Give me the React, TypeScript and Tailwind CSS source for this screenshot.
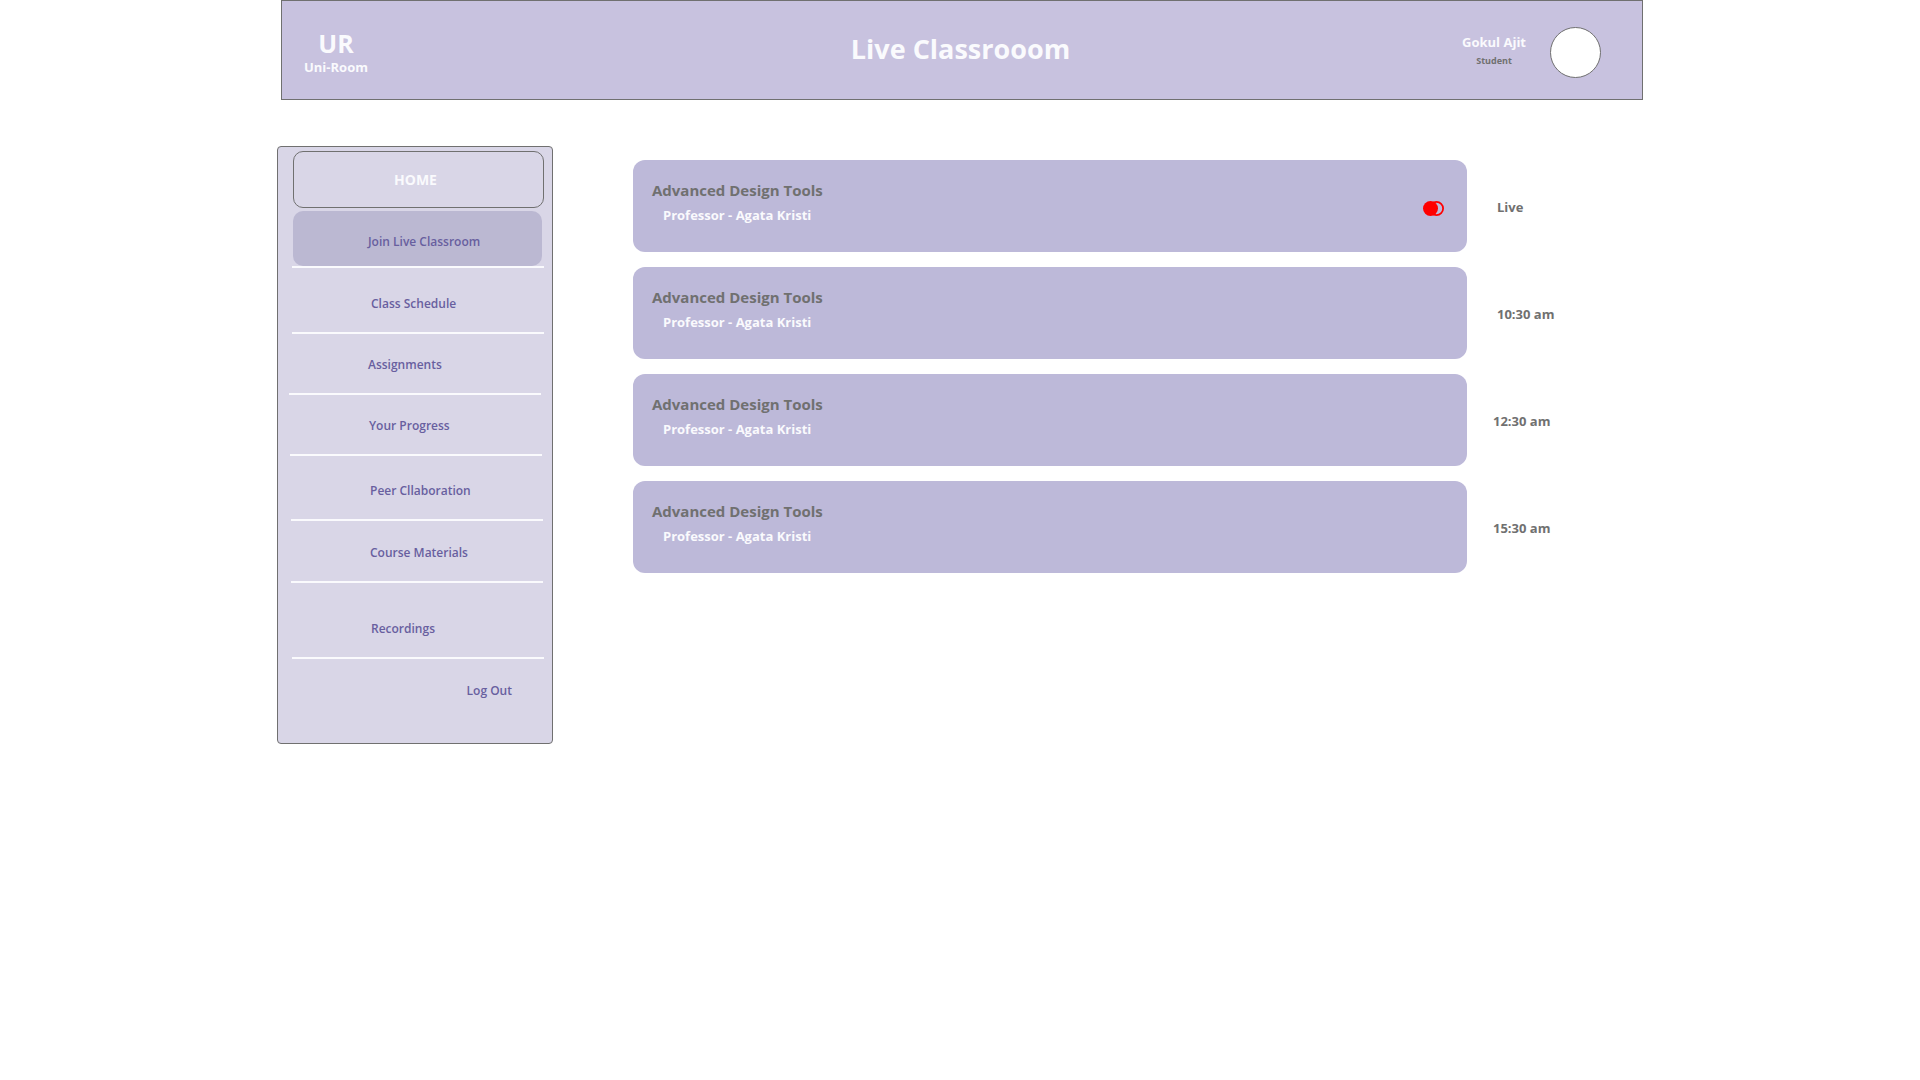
type NavItem = { label: string; row: string };

const navItems: NavItem[] = [
  { label: 'Class Schedule', row: 'ml-[14px] h-[66px]' },
  { label: 'Assignments', row: 'ml-[11px] h-[61px]' },
  { label: 'Your Progress', row: 'ml-[12px] h-[61px]' },
  { label: 'Peer Cllaboration', row: 'ml-[13px] h-[65px]' },
  { label: 'Course Materials', row: 'ml-[13px] h-[62px]' },
  { label: 'Recordings', row: 'ml-[14px] h-[76px]' },
];

const classes = [
  { time: 'Live', live: true, pad: 'pl-[30px]' },
  { time: '10:30 am', live: false, pad: 'pl-[30px]' },
  { time: '12:30 am', live: false, pad: 'pl-[26px]' },
  { time: '15:30 am', live: false, pad: 'pl-[26px]' },
];

function LiveIcon() {
  return (
    <svg className="mt-[5px]" width="21" height="15" viewBox="0 0 21 15" role="img" aria-label="Live now">
      <circle cx="13.5" cy="7.5" r="6.6" fill="none" stroke="#ff0000" strokeWidth="1.8" />
      <circle cx="7.5" cy="7.5" r="7.5" fill="#ff0000" />
    </svg>
  );
}

function Header() {
  return (
    <header className="ml-1 grid h-[100px] grid-cols-[1fr_auto_1fr] border border-[#707070] bg-[#c8c2df] font-bold text-[#fafafd]">
      <div className="ml-[22px] mt-[24px] w-fit text-center">
        <div className="text-[25px] leading-[36px]">UR</div>
        <div className="text-[13px] leading-[12px]">Uni-Room</div>
      </div>
      <h1 className="mt-[28px] pr-[3px] text-[27px] leading-[40px]">Live Classrooom</h1>
      <div className="mr-[41px] mt-[26px] flex items-start justify-end gap-6">
        <div className="mt-[5px] text-center">
          <div className="text-[13px] leading-[20px]">Gokul Ajit</div>
          <div className="text-[9px] leading-[18px] text-[#707070]">Student</div>
        </div>
        <button type="button" aria-label="Profile" className="size-[51px] rounded-full border border-[#707070] bg-white" />
      </div>
    </header>
  );
}

function Sidebar() {
  return (
    <nav className="flex w-[276px] shrink-0 flex-col rounded border border-[#707070] bg-[#d9d6e7] pb-[43px] pt-1 text-[12px] font-semibold leading-[18px] text-[#685f9f]">
      <a href="#home" className="ml-[15px] flex h-[57px] w-[251px] items-center justify-center rounded-[10px] border border-[#707070] pr-[6px] text-[14px] font-bold text-[#fafafd]">
        HOME
      </a>
      <a href="#live" className="ml-[15px] mt-[3px] flex h-[55px] w-[249px] items-end rounded-[10px] bg-[#bbb8d2] pb-[15px] pl-[75px]">
        Join Live Classroom
      </a>
      <div className="ml-[14px] h-[2px] w-[252px] bg-[#fafafd]" />
      {navItems.map((item) => (
        <div key={item.label} className={`${item.row} flex w-[252px] items-end border-b-2 border-[#fafafd] pb-[19px] pl-[79px]`}>
          <a href="#section">{item.label}</a>
        </div>
      ))}
      <button type="button" className="mr-[40px] mt-[23px] self-end">Log Out</button>
    </nav>
  );
}

export default function App() {
  return (
    <div className="min-h-screen bg-white font-['Open_Sans',sans-serif]">
      <div className="mx-auto max-w-[1366px]">
        <Header />
        <div className="mt-[46px] flex items-start gap-20">
          <Sidebar />
          <main className="mt-[14px] flex flex-1 flex-col gap-[15px] font-bold">
            {classes.map((item) => (
              <section key={item.time} className="flex items-center">
                <div className="flex h-[92px] flex-1 items-center justify-between rounded-xl bg-[#bdb9d9] pl-[19px] pr-[23px]">
                  <div className="pb-[5px]">
                    <h2 className="text-[15px] leading-[23px] text-[#707070]">Advanced Design Tools</h2>
                    <p className="pl-[11px] text-[13px] leading-[26px] text-[#fafafd]">Professor - Agata Kristi</p>
                  </div>
                  {item.live && <LiveIcon />}
                </div>
                <div className={`${item.pad} w-[176px] pt-[2px] text-[13px] leading-[20px] text-[#707070]`}>{item.time}</div>
              </section>
            ))}
          </main>
        </div>
      </div>
    </div>
  );
}
